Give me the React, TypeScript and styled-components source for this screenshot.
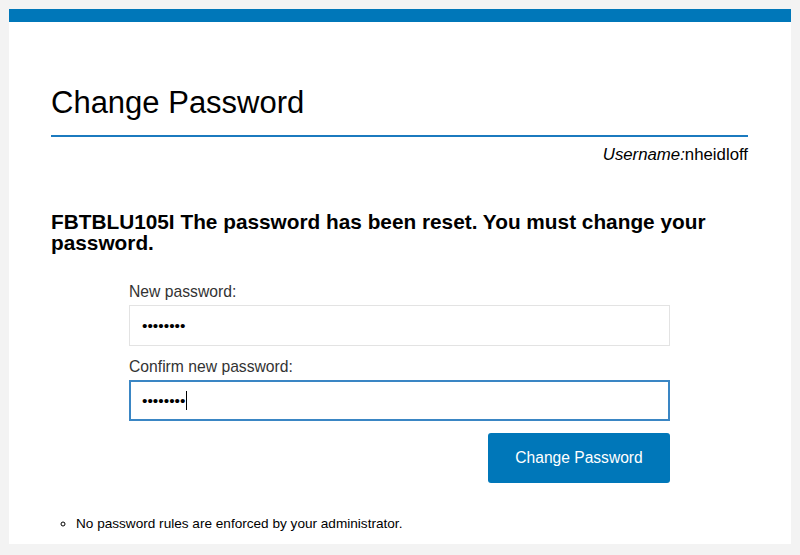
import React from "react";
import styled, { createGlobalStyle } from "styled-components";

const GlobalStyle = createGlobalStyle`
  html, body {
    margin: 0;
    padding: 0;
    background: #f3f3f3;
  }
  body {
    font-family: "Liberation Sans", Arial, Helvetica, sans-serif;
    color: #000;
  }
`;

const Page = styled.div`
  padding: 9px 9px 0 9px;
  width: 782px;
`;

const Card = styled.main`
  background: #ffffff;
  height: 535px;
  display: flex;
  flex-direction: column;
`;

const TopBar = styled.div`
  height: 13px;
  background: #0077b9;
  flex-shrink: 0;
`;

const Content = styled.div`
  padding: 63px 43px 0 42px;
  display: flex;
  flex-direction: column;
`;

const Title = styled.h1`
  margin: 0;
  font-size: 31px;
  font-weight: normal;
  line-height: 36px;
  padding-bottom: 14px;
  border-bottom: 2px solid #1b7abf;
  color: #000;
`;

const UserLine = styled.div`
  margin-top: 9px;
  text-align: right;
  font-size: 16.8px;
  line-height: 18px;
  em {
    font-style: italic;
  }
`;

const Message = styled.h2`
  margin: 47px 0 0 0;
  font-size: 20.8px;
  font-weight: bold;
  line-height: 21px;
`;

const Form = styled.form`
  margin: 30px 0 0 78px;
  width: 541px;
  display: flex;
  flex-direction: column;
`;

const Label = styled.label`
  display: block;
  font-size: 15.7px;
  line-height: 18px;
  color: #333;
  margin-bottom: 4px;
`;

const Field = styled.div<{ $gap?: number }>`
  position: relative;
  margin-bottom: ${(p) => p.$gap ?? 0}px;
`;

const Input = styled.input<{ $focused?: boolean }>`
  box-sizing: border-box;
  width: 100%;
  height: 41px;
  padding: 0 0 0 ${(p) => (p.$focused ? 11 : 12)}px;
  font-family: "Liberation Sans", Arial, sans-serif;
  font-size: 15.5px;
  color: #000;
  background: #fff;
  border: ${(p) => (p.$focused ? "2px solid #3a86c4" : "1px solid #e3e3e3")};
  border-radius: 0;
  outline: none;
`;

const Caret = styled.span`
  position: absolute;
  left: 57px;
  top: 11px;
  width: 1px;
  height: 19px;
  background: #000;
`;

const ButtonRow = styled.div`
  display: flex;
  justify-content: flex-end;
  margin-top: 12px;
`;

const Button = styled.button`
  width: 182px;
  height: 50px;
  background: #0077b9;
  color: #fff;
  border: none;
  border-radius: 3px;
  font-family: "Liberation Sans", Arial, sans-serif;
  font-size: 15.6px;
  cursor: pointer;
`;

const Rules = styled.ul`
  margin: 33px 0 0 0;
  padding: 0 0 0 25px;
  list-style: circle;
  font-size: 13.6px;
  line-height: 16px;
  color: #000;
`;

export default function App() {
  return (
    <>
      <GlobalStyle />
      <Page>
        <Card>
          <TopBar />
          <Content>
            <Title>Change Password</Title>
            <UserLine>
              <em>Username:</em>nheidloff
            </UserLine>
            <Message>
              FBTBLU105I The password has been reset. You must change your password.
            </Message>
            <Form onSubmit={(e) => e.preventDefault()}>
              <Label htmlFor="pw1">New password:</Label>
              <Field $gap={12}>
                <Input id="pw1" type="password" defaultValue="abcdefgh" readOnly />
              </Field>
              <Label htmlFor="pw2">Confirm new password:</Label>
              <Field>
                <Input id="pw2" type="password" defaultValue="abcdefgh" readOnly $focused />
                <Caret />
              </Field>
              <ButtonRow>
                <Button type="submit">Change Password</Button>
              </ButtonRow>
            </Form>
            <Rules>
              <li>No password rules are enforced by your administrator.</li>
            </Rules>
          </Content>
        </Card>
      </Page>
    </>
  );
}
